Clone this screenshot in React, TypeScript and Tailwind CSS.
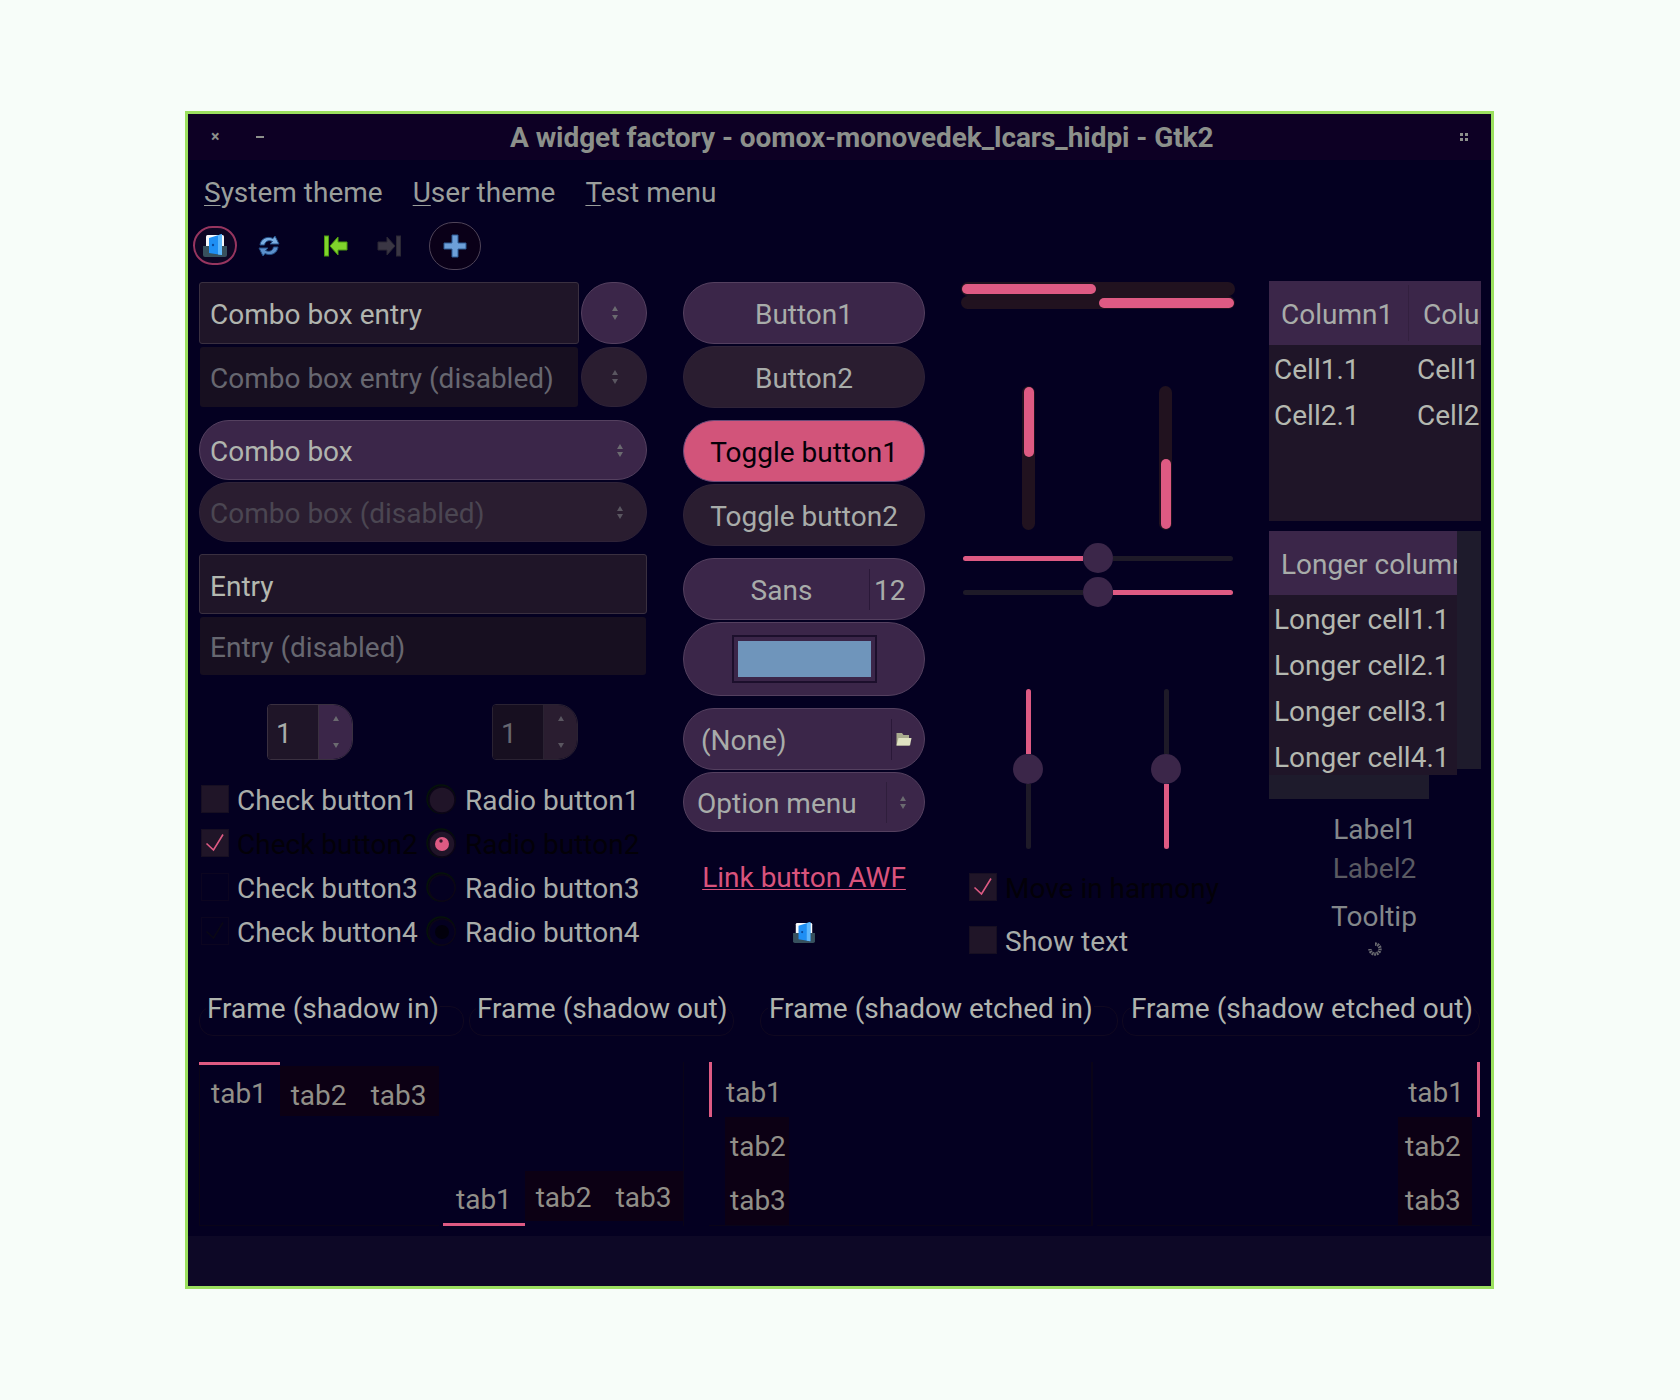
import React from "react";

const font = { fontFamily: "Roboto, 'Liberation Sans', sans-serif" };

function Arrows({ gap = 4, color = "#6b6a70" }: { gap?: number; color?: string }) {
  return (
    <svg width="6" height={10 + gap} viewBox={`0 0 6 ${10 + gap}`} className="block shrink-0">
      <path d="M3 0 L6 5 L0 5 Z" fill={color} />
      <path d={`M0 ${5 + gap} L6 ${5 + gap} L3 ${10 + gap} Z`} fill={color} />
    </svg>
  );
}

function Stock({ className = "" }: { className?: string }) {
  return (
    <svg viewBox="0 0 24 23" className={className}>
      <rect x="3" y="1" width="18" height="13" rx="1.5" fill="#f6f8fa" />
      <path d="M0 12 H24 V21 a2 2 0 0 1 -2 2 H2 a2 2 0 0 1 -2 -2 Z" fill="#37505d" />
      <path d="M6 4 L19 0 V21 L6 19 Z" fill="#1f8ff4" />
      <path d="M15 1.2 L19 0 V21 L15 20.4 Z" fill="#5fb8fc" />
      <circle cx="10" cy="11" r="1.2" fill="#0b4a9c" />
    </svg>
  );
}

function Refresh() {
  return (
    <svg width="24" height="24" viewBox="0 0 24 24" className="block">
      <path d="M3 11 C3.5 5 10 1.5 16 4.5 L18 2 L22 10 L13 10 L15.5 7.5 C11.5 5.5 8 7.5 7.5 11 Z" fill="#7aaee2" stroke="#234f88" strokeWidth="1" />
      <path d="M21 13 C20.5 19 14 22.5 8 19.5 L6 22 L2 14 L11 14 L8.5 16.5 C12.5 18.5 16 16.5 16.5 13 Z" fill="#5c90cc" stroke="#234f88" strokeWidth="1" />
    </svg>
  );
}

function Jump({ color, edge, flip = false }: { color: string; edge: string; flip?: boolean }) {
  return (
    <svg width="24" height="22" viewBox="0 0 24 22" className={flip ? "block -scale-x-100" : "block"}>
      <rect x="0.5" y="1" width="4" height="20" fill={color} stroke={edge} strokeWidth="1" />
      <path d="M6 11 L14 2 V7 H23 V15 H14 V20 Z" fill={color} stroke={edge} strokeWidth="1" />
    </svg>
  );
}

function Check({ mark, bg, border, className = "" }: { mark?: string; bg: string; border: string; className?: string }) {
  return (
    <div className={`w-[28px] h-[28px] shrink-0 border ${bg} ${border} ${className}`}>
      {mark ? (
        <svg viewBox="0 0 26 26" width="26" height="26" className="block">
          <path d="M4.5 13.5 L11.5 20 L21 4.5" fill="none" stroke={mark} strokeWidth="1.6" />
        </svg>
      ) : null}
    </div>
  );
}

function Radio({ fill, dot }: { fill: string; dot?: string }) {
  return (
    <svg width="31" height="31" viewBox="0 0 31 31" className="block shrink-0">
      <circle cx="15" cy="15" r="14" fill="#05090f" stroke="#06120a" strokeWidth="1.5" />
      <circle cx="16" cy="16" r="13" fill={fill} stroke="#0c0518" strokeWidth="1.5" />
      {dot ? <circle cx="16" cy="16" r="7" fill={dot} /> : null}
      {dot === "#de5a83" ? <circle cx="15" cy="13" r="1.7" fill="#3b1a2e" /> : null}
    </svg>
  );
}

function HSlider({ left, right, leftColor, rightColor, className = "" }: { left: string; right: string; leftColor: string; rightColor: string; className?: string }) {
  return (
    <div className={`flex items-center h-[30px] w-[270px] ml-[2px] ${className}`}>
      <div className={`h-[5px] rounded-l-full ${left} ${leftColor}`} />
      <div className="w-[30px] h-[30px] rounded-full bg-[#3b2649] shrink-0" />
      <div className={`h-[5px] rounded-r-full ${right} ${rightColor}`} />
    </div>
  );
}

function VSlider({ topColor, bottomColor, className = "" }: { topColor: string; bottomColor: string; className?: string }) {
  return (
    <div className={`flex flex-col items-center w-[30px] h-[160px] shrink-0 ${className}`}>
      <div className={`w-[5px] h-[65px] rounded-t-full ${topColor}`} />
      <div className="w-[30px] h-[30px] rounded-full bg-[#3b2649] shrink-0" />
      <div className={`w-[5px] h-[65px] rounded-b-full ${bottomColor}`} />
    </div>
  );
}

function Frame({ label, className, inset }: { label: string; className: string; inset: string }) {
  return (
    <div className={`h-[30px] rounded-[14px] border border-[#100820] shrink-0 ${className}`}>
      <div className={`-mt-[17px] ${inset} w-fit h-[38px] leading-[38px] px-px bg-[#040021] whitespace-nowrap`}>{label}</div>
    </div>
  );
}

const btn = "h-[62px] rounded-full flex items-center justify-center pt-[4px]";
const raised = "bg-[#3b2649] border border-[#54405f]";
const flat = "bg-[#2a1d30] border border-[#2f2338]";

export default function App() {
  return (
    <div className="min-h-[1400px] bg-[#f7fdf9] pt-[111px] pl-[185px]" style={font}>
      <div className="w-[1309px] h-[1178px] border-[3px] border-[#9be05f] bg-[#040021] text-[#a8aca9] text-[28px] flex flex-col overflow-hidden">
        {/* title bar */}
        <div className="h-[46px] bg-[#0d0024] flex items-center text-[#8c908b] shrink-0">
          <span className="ml-[23px] w-[10px] text-[16px] font-bold leading-none">×</span>
          <span className="ml-[35px] w-[8px] h-[2px] bg-[#8c908b]" />
          <span className="ml-[246px] font-bold whitespace-nowrap pt-[1px] tracking-[-0.07px]">A widget factory - oomox-monovedek_lcars_hidpi - Gtk2</span>
          <div className="ml-[247px] grid grid-cols-2 gap-[2px]">
            <i className="block w-[3px] h-[3px] bg-[#8c908b]" />
            <i className="block w-[3px] h-[3px] bg-[#8c908b]" />
            <i className="block w-[3px] h-[3px] bg-[#8c908b]" />
            <i className="block w-[3px] h-[3px] bg-[#8c908b]" />
          </div>
        </div>
        {/* menu */}
        <div className="h-[62px] flex items-center pl-[16px] pt-[6px] text-[#9a9e9b] shrink-0 -mt-px">
          <span><u className="underline underline-offset-[3px] decoration-1">S</u>ystem theme</span>
          <span className="ml-[30px]"><u className="underline underline-offset-[3px] decoration-1">U</u>ser theme</span>
          <span className="ml-[30px]"><u className="underline underline-offset-[3px] decoration-1">T</u>est menu</span>
        </div>
        {/* toolbar */}
        <div className="h-[49px] flex items-center shrink-0">
          <div className="ml-[5px] w-[44px] h-[39px] rounded-full border-2 border-[#97355f] bg-[#0d0624] flex items-center justify-center">
            <Stock className="w-[24px] h-[23px] block" />
          </div>
          <div className="ml-[20px]"><Refresh /></div>
          <div className="ml-[43px]"><Jump color="#80d42c" edge="#4c9a10" /></div>
          <div className="ml-[29px]"><Jump color="#3a3644" edge="#2a2734" flip /></div>
          <div className="ml-[28px] w-[52px] h-[48px] rounded-full border border-[#4f4458] bg-[#0a0018] flex items-center justify-center">
            <svg width="24" height="24" viewBox="0 0 24 24" className="block">
              <path d="M9 1 H15 V9 H23 V15 H15 V23 H9 V15 H1 V9 H9 Z" fill="#6d9fd8" stroke="#2d5a94" strokeWidth="1" />
            </svg>
          </div>
        </div>
        {/* main */}
        <div className="h-[724px] mt-[12px] flex pl-[11px] shrink-0">
          {/* column 1 */}
          <div className="w-[448px] shrink-0 flex flex-col">
            <div className="flex h-[62px]">
              <div className="w-[380px] bg-[#1f1528] border border-[#3a3040] rounded-[3px] flex items-center pl-[10px] pt-[4px] text-[#b0b4ae]">Combo box entry</div>
              <div className={`ml-[2px] w-[66px] rounded-full flex items-center justify-center pl-[2px] ${raised}`}><Arrows /></div>
            </div>
            <div className="flex h-[60px] mt-[3px]">
              <div className="ml-px w-[378px] bg-[#170f20] rounded-[3px] flex items-center pl-[10px] pt-[4px] text-[#676770]">Combo box entry (disabled)</div>
              <div className={`ml-[3px] w-[66px] rounded-full flex items-center justify-center pl-[2px] ${flat}`}><Arrows color="#5a5660" /></div>
            </div>
            <div className={`mt-[13px] h-[60px] rounded-full ${raised} flex items-center justify-between pl-[10px] pr-[23px]`}>
              <span className="text-[#b0b4ae] pt-[4px]">Combo box</span><Arrows gap={3} />
            </div>
            <div className={`mt-[2px] h-[60px] rounded-full ${flat} flex items-center justify-between pl-[10px] pr-[23px]`}>
              <span className="text-[#4b4652] pt-[4px]">Combo box (disabled)</span><Arrows gap={3} color="#5a5660" />
            </div>
            <div className="mt-[12px] h-[60px] bg-[#1f1528] border border-[#3a3040] rounded-[3px] flex items-center pl-[10px] pt-[6px] text-[#b4b8b0]">Entry</div>
            <div className="mt-[3px] h-[58px] mx-px bg-[#170f20] rounded-[3px] flex items-center pl-[10px] pt-[4px] text-[#676770]">Entry (disabled)</div>
            <div className="mt-[29px] flex h-[56px]">
              <div className="ml-[68px] w-[86px] flex rounded-l-[4px] rounded-r-[20px] overflow-hidden border border-[#3a3040]">
                <div className="w-[51px] bg-[#1f1528] border-r border-[#3a3040] pl-[8px] pt-[4px] flex items-center">1</div>
                <div className="flex-1 bg-[#3b2649] flex items-center justify-center"><Arrows gap={22} /></div>
              </div>
              <div className="ml-[139px] w-[86px] flex rounded-l-[4px] rounded-r-[20px] overflow-hidden border border-[#2a2232]">
                <div className="w-[51px] bg-[#170f20] border-r border-[#2a2232] pl-[8px] pt-[4px] flex items-center text-[#676770]">1</div>
                <div className="flex-1 bg-[#2a1d30] flex items-center justify-center"><Arrows gap={22} color="#5a5660" /></div>
              </div>
            </div>
            <div className="mt-[25px] flex flex-col gap-[16px] ml-[2px]">
              {[
                { t: "1", c: "text-[#a8aca9]", b: "bg-[#201528]", bd: "border-[#170f22]", r: "#201428" },
                { t: "2", c: "text-[#030008]", b: "bg-[#201528]", bd: "border-[#170f22]", m: "#de5a83", r: "#201428", d: "#de5a83" },
                { t: "3", c: "text-[#a8aca9]", b: "bg-[#040021]", bd: "border-[#0c0520]", r: "#040021" },
                { t: "4", c: "text-[#a8aca9]", b: "bg-[#040021]", bd: "border-[#0c0520]", m: "#0a0716", r: "#040021", d: "#02000c" },
              ].map((x) => (
                <div key={x.t} className="flex items-center h-[28px]">
                  <Check mark={x.m} bg={x.b} border={x.bd} />
                  <span className={`ml-[8px] w-[189px] pt-[4px] whitespace-nowrap ${x.c}`}>Check button{x.t}</span>
                  <Radio fill={x.r} dot={x.d} />
                  <span className={`ml-[8px] pt-[4px] whitespace-nowrap ${x.c}`}>Radio button{x.t}</span>
                </div>
              ))}
            </div>
          </div>
          {/* column 2 */}
          <div className="ml-[36px] w-[242px] shrink-0 flex flex-col">
            <div className={`${btn} ${raised}`}>Button1</div>
            <div className={`${btn} ${flat} mt-[2px]`}>Button2</div>
            <div className={`${btn} bg-[#d2547a] border border-[#6a4a78] mt-[12px] h-[61px] text-[#050008]`}>Toggle button1</div>
            <div className={`${btn} ${flat} mt-[2px]`}>Toggle button2</div>
            <div className={`${btn} ${raised} mt-[12px] justify-start`}>
              <span className="w-[185px] text-center pl-[10px]">Sans</span>
              <span className="w-px h-[41px] bg-[#2a1838] -mt-[4px]" />
              <span className="ml-[4px]">12</span>
            </div>
            <div className={`h-[74px] mt-[2px] rounded-full ${raised} flex items-center justify-center`}>
              <div className="w-[145px] h-[48px] border-[2px] border-[#1c0f2c] p-[4px]">
                <div className="w-full h-full bg-[#6f95bb]" />
              </div>
            </div>
            <div className={`${btn} ${raised} mt-[12px] justify-start pl-[17px]`}>
              <span className="w-[190px]">(None)</span>
              <span className="w-px h-[41px] bg-[#2a1838] -mt-[4px]" />
              <svg width="16" height="14" viewBox="0 0 16 14" className="ml-[4px] block -mt-[4px]">
                <path d="M0.5 13.5 V1 H6 L7.5 3 H13 V13.5 Z" fill="#a9ab8e" />
                <path d="M0.5 13.5 L2.5 6 H15.5 L14 13.5 Z" fill="#dfe2c2" />
              </svg>
            </div>
            <div className={`h-[60px] rounded-full ${raised} mt-[2px] flex items-center pl-[13px]`}>
              <span className="w-[189px] pt-[4px]">Option menu</span>
              <span className="w-px h-[41px] bg-[#2f1e3c]" />
              <span className="ml-[13px]"><Arrows gap={3} /></span>
            </div>
            <div className="mt-[29px] text-center text-[#d9537c] underline underline-offset-[2px] decoration-1 leading-[34px]">Link button AWF</div>
            <Stock className="w-[22px] h-[21px] block mx-auto mt-[27px]" />
          </div>
          {/* column 3 */}
          <div className="ml-[36px] w-[274px] shrink-0 flex flex-col">
            <div className="h-[14px] w-full rounded-full bg-[#21121f] flex items-center px-px">
              <div className="h-[10px] w-[134px] rounded-full bg-[#de5a83]" />
            </div>
            <div className="h-[13px] w-full rounded-full bg-[#21121f] flex items-center justify-end px-px">
              <div className="h-[10px] w-[135px] rounded-full bg-[#de5a83]" />
            </div>
            <div className="flex mt-[77px]">
              <div className="ml-[61px] w-[13px] h-[144px] rounded-full bg-[#21121f] flex flex-col items-center py-px">
                <div className="w-[10px] h-[70px] rounded-full bg-[#de5a83]" />
              </div>
              <div className="ml-[124px] w-[13px] h-[144px] rounded-full bg-[#21121f] flex flex-col justify-end items-center py-px">
                <div className="w-[10px] h-[70px] rounded-full bg-[#de5a83]" />
              </div>
            </div>
            <HSlider className="mt-[13px]" left="w-[120px]" right="w-[120px]" leftColor="bg-[#de5a83]" rightColor="bg-[#1e1a28]" />
            <HSlider className="mt-[4px]" left="w-[120px]" right="w-[120px]" leftColor="bg-[#1e1a28]" rightColor="bg-[#de5a83]" />
            <div className="flex mt-[82px]">
              <VSlider className="ml-[52px]" topColor="bg-[#de5a83]" bottomColor="bg-[#1e1a28]" />
              <VSlider className="ml-[108px]" topColor="bg-[#1e1a28]" bottomColor="bg-[#de5a83]" />
            </div>
            <div className="flex items-center h-[28px] mt-[24px] ml-[8px]">
              <Check mark="#de5a83" bg="bg-[#201528]" border="border-[#170f22]" />
              <span className="ml-[8px] pt-[4px] text-[#030008] whitespace-nowrap">Move in harmony</span>
            </div>
            <div className="flex items-center h-[28px] mt-[25px] ml-[8px]">
              <Check bg="bg-[#201528]" border="border-[#170f22]" />
              <span className="ml-[8px] pt-[4px] whitespace-nowrap">Show text</span>
            </div>
          </div>
          {/* column 4 */}
          <div className="ml-[34px] w-[212px] shrink-0 flex flex-col -mt-px">
            <div className="h-[240px] bg-[#1f1528] overflow-hidden">
              <div className="h-[64px] bg-[#3b2649] flex items-center">
                <span className="w-[140px] pl-[12px] h-[56px] leading-[60px] border-r border-[#33203f] shrink-0">Column1</span>
                <span className="pl-[14px] pt-[4px] whitespace-nowrap w-[72px] overflow-hidden">Column2</span>
              </div>
              <div className="flex h-[46px] items-center pt-[4px] text-[#b4b8b0] whitespace-nowrap"><span className="w-[148px] shrink-0 pl-[5px]">Cell1.1</span><span>Cell1.2</span></div>
              <div className="flex h-[46px] items-center pt-[4px] text-[#b4b8b0] whitespace-nowrap"><span className="w-[148px] shrink-0 pl-[5px]">Cell2.1</span><span>Cell2.2</span></div>
            </div>
            <div className="mt-[10px] h-[268px]">
              <div className="flex h-[244px] items-start">
                <div className="w-[188px] shrink-0">
                  <div className="h-[64px] bg-[#3b2649] flex items-center pl-[12px] pt-[4px] whitespace-nowrap overflow-hidden">Longer column1</div>
                  <div className="bg-[#1f1528] h-[180px] pt-[2px] text-[#b4b8b0]">
                    {["1.1", "2.1", "3.1", "4.1"].map((c) => (
                      <div key={c} className="h-[46px] flex items-center pl-[5px] whitespace-nowrap">Longer cell{c}</div>
                    ))}
                  </div>
                </div>
                <div className="w-[24px] h-[238px] bg-[#1e1b2c]" />
              </div>
              <div className="w-[160px] h-[24px] bg-[#1e1b2c]" />
            </div>
            <div className="text-center text-[#83878a] mt-[14px] leading-[34px]">Label1</div>
            <div className="text-center text-[#5a5a62] mt-[5px] leading-[34px] pr-[1px]">Label2</div>
            <div className="text-center text-[#83878a] mt-[14px] leading-[34px] pr-[2px]">Tooltip</div>
            <svg width="14" height="14" viewBox="0 0 14 14" className="block mx-auto mt-[8px] shrink-0">
              <path d="M7 2 A5 5 0 1 1 2 7" fill="none" stroke="#6a6a70" strokeWidth="3.4" strokeDasharray="1.7 0.7" />
            </svg>
          </div>
        </div>
        {/* frames */}
        <div className="h-[30px] flex pl-[11px] text-[#b0b4ae] shrink-0">
          <Frame label="Frame (shadow in)" className="w-[265px]" inset="ml-[6px]" />
          <Frame label="Frame (shadow out)" className="ml-[5px] w-[265px]" inset="ml-[6px]" />
          <Frame label="Frame (shadow etched in)" className="ml-[26px] w-[358px]" inset="ml-[7px]" />
          <Frame label="Frame (shadow etched out)" className="ml-[4px] w-[358px]" inset="ml-[7px]" />
        </div>
        {/* notebooks */}
        <div className="h-[164px] mt-[26px] flex pl-[11px] text-[#918f88] shrink-0">
          <div className="w-[240px] h-full border border-[#0a0418] border-t-0 border-r-0 shrink-0 flex items-start">
            <div className="w-[81px] h-[52px] border-t-[3px] border-[#de5a83] flex items-center pl-[12px] pt-[8px] -ml-px">tab1</div>
            <div className="mt-[4px] h-[50px] w-[160px] bg-[#0c0014] flex items-center pl-[11px] pt-[10px]">
              <span className="w-[80px]">tab2</span><span>tab3</span>
            </div>
          </div>
          <div className="ml-[4px] w-[241px] h-full border-r border-[#0a0418] flex items-end shrink-0">
            <div className="w-[82px] h-[53px] border-b-[3px] border-[#de5a83] flex items-center pl-[13px] pt-[4px]">tab1</div>
            <div className="mb-[5px] h-[50px] w-[159px] bg-[#0c0014] flex items-center pl-[11px] pt-[4px]">
              <span className="w-[80px]">tab2</span><span>tab3</span>
            </div>
          </div>
          <div className="ml-[25px] w-[384px] h-full border-r-2 border-b border-[#0a0418] shrink-0">
            <div className="h-[55px] w-[3px] bg-[#de5a83]" />
            <div className="-mt-[55px] h-[55px] pl-[17px] pt-[6px] flex items-center">tab1</div>
            <div className="ml-[16px] w-[64px] bg-[#0c0014] h-[108px] pl-[5px]">
              <div className="h-[54px] flex items-center pt-[5px]">tab2</div>
              <div className="h-[54px] flex items-center pt-[5px]">tab3</div>
            </div>
          </div>
          <div className="ml-[4px] w-[383px] h-full shrink-0 border-b border-[#0a0418]">
            <div className="h-[55px] flex items-center justify-end">
              <span className="mr-[13px] pt-[6px]">tab1</span>
              <span className="w-[3px] h-[55px] bg-[#de5a83]" />
            </div>
            <div className="ml-[301px] w-[74px] bg-[#0c0014] h-[108px] pl-[7px]">
              <div className="h-[54px] flex items-center pt-[5px]">tab2</div>
              <div className="h-[54px] flex items-center pt-[5px]">tab3</div>
            </div>
          </div>
        </div>
        {/* status */}
        <div className="mt-[10px] flex-1 bg-[#0d0826]" />
      </div>
    </div>
  );
}
